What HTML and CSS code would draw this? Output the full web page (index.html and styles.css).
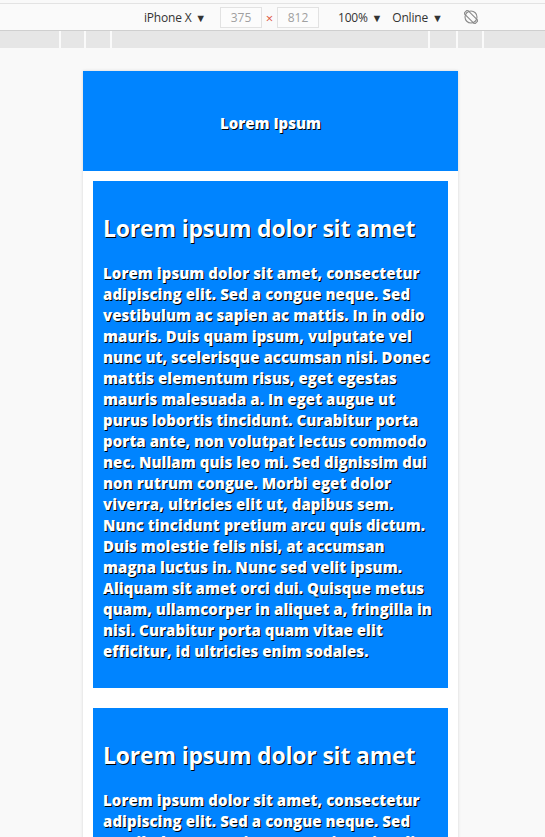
FILE: index.html
```html
<!DOCTYPE html>
<html lang="en">
<head>
<meta charset="utf-8">
<title>Device preview</title>
<link rel="stylesheet" href="styles.css">
</head>
<body>
<div class="toolbar">
  <div class="tb-item">iPhone X <span class="caret">▼</span></div>
  <div class="dims">
    <div class="dim-box">375</div>
    <span class="times">×</span>
    <div class="dim-box">812</div>
  </div>
  <div class="tb-item zoom">100% <span class="caret">▼</span></div>
  <div class="tb-item online">Online <span class="caret">▼</span></div>
  <svg class="rotate" width="14" height="14" viewBox="0 0 14 14" aria-hidden="true">
    <circle cx="7" cy="7" r="6" fill="none" stroke="#8a8a8a" stroke-width="1.1"/>
    <rect x="4.6" y="-0.6" width="4.8" height="15.2" rx="1" transform="rotate(-45 7 7)" fill="none" stroke="#8a8a8a" stroke-width="1.1"/>
  </svg>
</div>
<div class="mq-bar">
  <div class="mq" style="width:59px"></div>
  <div class="mq" style="width:23px"></div>
  <div class="mq" style="width:24px"></div>
  <div class="mq" style="width:316px"></div>
  <div class="mq" style="width:26px"></div>
  <div class="mq" style="width:24px"></div>
  <div class="mq" style="width:61px"></div>
</div>
<div class="stage">
  <div class="device">
    <header class="site-header">Lorem Ipsum</header>
    <main class="content">
      <section class="card">
        <h2>Lorem ipsum dolor sit amet</h2>
        <p>Lorem ipsum dolor sit amet, consectetur adipiscing elit. Sed a congue neque. Sed vestibulum ac sapien ac mattis. In in odio mauris. Duis quam ipsum, vulputate vel nunc ut, scelerisque accumsan nisi. Donec mattis elementum risus, eget egestas mauris malesuada a. In eget augue ut purus lobortis tincidunt. Curabitur porta porta ante, non volutpat lectus commodo nec. Nullam quis leo mi. Sed dignissim dui non rutrum congue. Morbi eget dolor viverra, ultricies elit ut, dapibus sem. Nunc tincidunt pretium arcu quis dictum. Duis molestie felis nisi, at accumsan magna luctus in. Nunc sed velit ipsum. Aliquam sit amet orci dui. Quisque metus quam, ullamcorper in aliquet a, fringilla in nisi. Curabitur porta quam vitae elit efficitur, id ultricies enim sodales.</p>
      </section>
      <section class="card">
        <h2>Lorem ipsum dolor sit amet</h2>
        <p>Lorem ipsum dolor sit amet, consectetur adipiscing elit. Sed a congue neque. Sed vestibulum ac sapien ac mattis. In in odio mauris. Duis quam ipsum, vulputate vel nunc ut, scelerisque accumsan nisi. Donec mattis elementum risus, eget egestas mauris malesuada a. In eget augue ut purus lobortis tincidunt. Curabitur porta porta ante, non volutpat lectus commodo nec. Nullam quis leo mi.</p>
      </section>
    </main>
  </div>
</div>
</body>
</html>
```
FILE: styles.css
```css
* { box-sizing: border-box; }
html, body { margin: 0; padding: 0; }
body {
  background: #f9f9f9;
  font-family: "Open Sans", "Noto Sans", sans-serif;
  overflow: hidden;
  height: 837px;
}
.toolbar {
  margin-top: 3px;
  height: 28px;
  border-top: 1px solid #e3e3e3;
  border-bottom: 1px solid #cfcfcf;
  background: #fafafa;
  display: flex;
  align-items: center;
  padding-left: 144px;
  font-size: 12px;
  color: #333;
}
.tb-item { white-space: nowrap; letter-spacing: -0.2px; }
.caret { font-size: 11px; margin-left: 1px; }
.dims { display: flex; align-items: center; margin-left: 14px; }
.dim-box {
  width: 42px;
  height: 21px;
  border: 1px solid #e2e2e2;
  background: #fcfcfc;
  color: #a0a0a0;
  display: flex;
  align-items: center;
  justify-content: center;
}
.times { color: #e0563d; width: 15px; text-align: center; font-size: 13px; padding-top: 2px; }
.zoom { margin-left: 19px; }
.online { margin-left: 10px; }
.rotate { margin-left: 21px; }
.mq-bar {
  display: flex;
  gap: 2px;
  background: #fafafa;
  height: 17px;
}
.mq { background: #e6e6e6; height: 17px; }
.stage { padding-top: 23px; display: flex; justify-content: center; padding-right: 4px; }
.device {
  width: 375px;
  background: #fff;
  box-shadow: 0 0 3px rgba(0,0,0,0.15);
  height: 800px;
}
.site-header {
  height: 100px;
  background: #0084ff;
  color: #fff;
  font-weight: 800;
  font-size: 15px;
  display: flex;
  align-items: center;
  justify-content: center;
  padding-top: 4px;
  text-shadow: 1px 1px 0 #000;
}
.content { padding: 10px 10px 0; display: flex; flex-direction: column; gap: 20px; }
.card {
  background: #0084ff;
  color: #fff;
  padding: 10px;
  text-shadow: 1px 1px 0 #000;
}
.card h2 {
  margin: 20px 0 0;
  font-size: 23px;
  font-weight: 700;
  line-height: 35px;
  letter-spacing: -0.2px;
}
.card p {
  margin: 17px 0 16px;
  font-size: 15px;
  font-weight: 800;
  line-height: 21px;
  letter-spacing: 0.05px;
}
```
